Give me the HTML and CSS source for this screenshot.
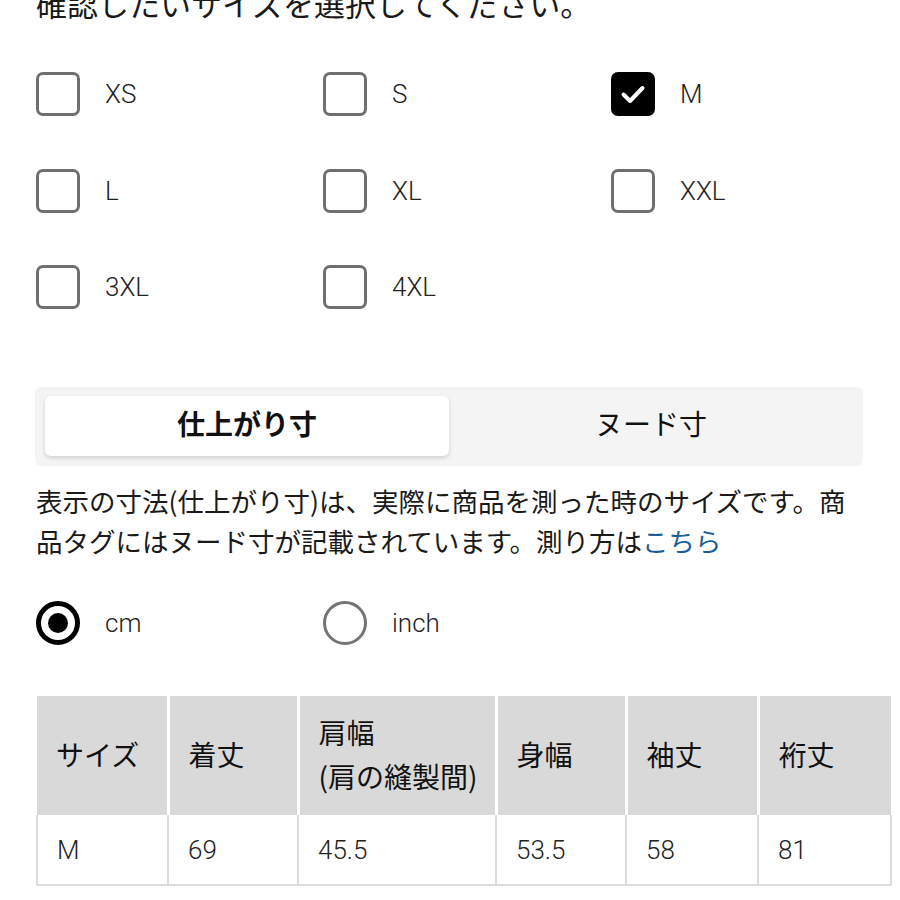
FILE: index.html
```html
<!DOCTYPE html>
<html lang="ja">
<head>
    <meta charset="UTF-8">
    <meta name="viewport" content="width=device-width, initial-scale=1.0">
    <title>サイズ表</title>
    <link rel="stylesheet" href="styles.css">
</head>
<body>
    <div class="page">
        <p class="title">確認したいサイズを選択してください。</p>

        <!-- サイズ選択 -->
        <div class="size-grid">
            <label class="option"><span class="box"></span><span class="opt-label">XS</span></label>
            <label class="option"><span class="box"></span><span class="opt-label">S</span></label>
            <label class="option"><span class="box checked">
                <svg viewBox="0 0 44 44" width="44" height="44"><path d="M12.5 22.5 L19 29 L31.5 16" fill="none" stroke="#fff" stroke-width="4" stroke-linecap="round" stroke-linejoin="round"/></svg>
            </span><span class="opt-label">M</span></label>
            <label class="option"><span class="box"></span><span class="opt-label">L</span></label>
            <label class="option"><span class="box"></span><span class="opt-label">XL</span></label>
            <label class="option"><span class="box"></span><span class="opt-label">XXL</span></label>
            <label class="option"><span class="box"></span><span class="opt-label">3XL</span></label>
            <label class="option"><span class="box"></span><span class="opt-label">4XL</span></label>
        </div>

        <!-- 切り替えタブ -->
        <div class="segment">
            <div class="tab active">仕上がり寸</div>
            <div class="tab">ヌード寸</div>
        </div>

        <p class="note">表示の寸法(仕上がり寸)は、実際に商品を測った時のサイズです。商品タグにはヌード寸が記載されています。測り方は<a href="#" class="link">こちら</a></p>

        <!-- 単位 -->
        <div class="unit-row">
            <label class="option"><span class="radio on"></span><span class="opt-label">cm</span></label>
            <label class="option"><span class="radio"></span><span class="opt-label">inch</span></label>
        </div>

        <table class="size-table">
            <colgroup>
                <col class="c1">
                <col class="c2">
                <col class="c3">
                <col class="c4">
                <col class="c5">
                <col class="c6">
            </colgroup>
            <thead>
                <tr>
                    <th>サイズ</th>
                    <th>着丈</th>
                    <th>肩幅<br>(肩の縫製間)</th>
                    <th>身幅</th>
                    <th>袖丈</th>
                    <th>裄丈</th>
                </tr>
            </thead>
            <tbody>
                <tr>
                    <td>M</td>
                    <td>69</td>
                    <td>45.5</td>
                    <td>53.5</td>
                    <td>58</td>
                    <td>81</td>
                </tr>
            </tbody>
        </table>
    </div>
</body>
</html>
```

FILE: styles.css
```css
/* ベース */
body {
    margin: 0;
    background-color: #fff;
    color: #1a1a1a;
    font-family: 'Noto Sans CJK JP', 'Noto Sans', sans-serif;
    overflow: hidden;
}

.page {
    padding: 0 0 0 36px;
}

.title {
    font-size: 31px;
    line-height: 40px;
    margin: -17px 0 0 0;
    white-space: nowrap;
}

/* チェックボックス */
.size-grid {
    display: grid;
    grid-template-columns: 287px 288px 1fr;
    row-gap: 52.5px;
    margin-top: 49px;
}

.option {
    display: flex;
    align-items: center;
    gap: 25px;
    height: 44px;
}

.box {
    box-sizing: border-box;
    width: 44px;
    height: 44px;
    border: 3px solid #6f6f6f;
    border-radius: 7px;
    flex-shrink: 0;
}

.box.checked {
    background-color: #000;
    border-color: #000;
    position: relative;
}

.box.checked svg {
    position: absolute;
    left: -3px;
    top: -3px;
}

.opt-label {
    font-family: 'Roboto', 'Liberation Sans', sans-serif;
    font-weight: 300;
    font-size: 26px;
    color: #222;
}

/* タブ */
.segment {
    display: flex;
    width: 828px;
    box-sizing: border-box;
    margin: 78px 0 0 -1px;
    padding: 9px 10px 10px 10px;
    background-color: #f4f4f4;
    border-radius: 6px;
}

.tab {
    flex: 1;
    height: 60px;
    box-sizing: border-box;
    padding-bottom: 6px;
    display: flex;
    align-items: center;
    justify-content: center;
    font-size: 28px;
    color: #111;
}

.tab.active {
    background-color: #fff;
    border-radius: 6px;
    font-weight: 700;
    box-shadow: 0 2px 4px rgba(0, 0, 0, 0.15);
}

/* 説明文 */
.note {
    font-size: 26.5px;
    line-height: 40px;
    margin: 15px 0 0 0;
    width: 825px;
}

.link {
    color: #1b5e96;
    text-decoration: none;
}

/* 単位 */
.unit-row {
    display: grid;
    grid-template-columns: 287px 1fr;
    margin-top: 40px;
}

.radio {
    box-sizing: border-box;
    width: 44px;
    height: 44px;
    border: 3px solid #747474;
    border-radius: 50%;
    flex-shrink: 0;
    display: flex;
    align-items: center;
    justify-content: center;
}

.radio.on {
    border: 5px solid #000;
}

.radio.on::after {
    content: '';
    width: 20px;
    height: 20px;
    border-radius: 50%;
    background-color: #000;
}

/* サイズ表 */
.size-table {
    margin-top: 51px;
    width: 854px;
    border-collapse: collapse;
    table-layout: fixed;
}

.size-table th,
.size-table td {
    text-align: left;
    padding: 0 0 0 19px;
}

.size-table th {
    height: 115px;
    padding-bottom: 4px;
    background-color: #d9d9d9;
    font-size: 28px;
    font-weight: 400;
    line-height: 44px;
    border-left: 3px solid #fff;
    color: #111;
}

.size-table th:first-child {
    border-left: none;
}

.size-table td {
    height: 69px;
    font-family: 'Roboto', 'Liberation Sans', sans-serif;
    font-weight: 300;
    font-size: 26px;
    border: 2px solid #dcdcdc;
    border-top: none;
    color: #222;
}

.c1 { width: 131px; }
.c2 { width: 130px; }
.c3 { width: 198px; }
.c4 { width: 130px; }
.c5 { width: 132px; }
.c6 { width: 133px; }
```
